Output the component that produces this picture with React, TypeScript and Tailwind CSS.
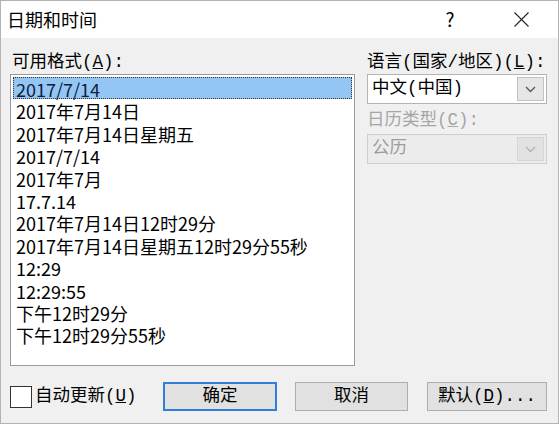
const formats = [
  "2017/7/14",
  "2017年7月14日",
  "2017年7月14日星期五",
  "2017/7/14",
  "2017年7月",
  "17.7.14",
  "2017年7月14日12时29分",
  "2017年7月14日星期五12时29分55秒",
  "12:29",
  "12:29:55",
  "下午12时29分",
  "下午12时29分55秒",
];

const uiFont = { fontFamily: '"Liberation Mono", "Noto Sans CJK SC", monospace' };
const cjkFont = { fontFamily: '"Noto Sans CJK SC", "Noto Sans", sans-serif' };

const Chevron = ({ color }: { color: string }) => (
  <svg width="11" height="7" viewBox="0 0 11 7">
    <path d="M1 1 L5.5 5.5 L10 1" fill="none" stroke={color} strokeWidth="1.3" />
  </svg>
);

const Combo = ({ text, disabled }: { text: string; disabled?: boolean }) => (
  <div
    className={
      "flex h-[30px] items-center border pl-[4px] pr-[2px] " +
      (disabled ? "border-[#cfcfcf] bg-[#ececec] text-[#9c9c9c]" : "border-[#b4b4b4] bg-white text-black")
    }
  >
    <span className="flex-1 text-[17.5px] leading-none">{text}</span>
    <div
      className={
        "flex h-[24px] w-[27px] items-center justify-center border " +
        (disabled ? "border-[#d6d6d6] bg-[#e2e2e2]" : "border-[#c2c2c2] bg-[#e6e6e6]")
      }
    >
      <Chevron color={disabled ? "#b0b0b0" : "#555555"} />
    </div>
  </div>
);

export default function App() {
  return (
    <div className="flex h-[424px] w-[559px] flex-col border border-[#b3b3b3] bg-[#f0f0f0] text-black" style={uiFont}>
      <div className="flex h-[37px] items-center bg-white pl-[6px]">
        <span className="text-[18px]" style={cjkFont}>日期和时间</span>
        <div className="ml-auto mr-[17px] flex items-center">
          <span className="w-[40px] text-center text-[19px]" style={cjkFont}>?</span>
          <div className="ml-[31px] flex w-[40px] justify-center">
            <svg width="15" height="15" viewBox="0 0 15 15">
              <path d="M0.5 0.5 L14.5 14.5 M14.5 0.5 L0.5 14.5" stroke="#222" strokeWidth="1.1" />
            </svg>
          </div>
        </div>
      </div>

      <div className="mt-[12px] flex pl-[9px]">
        <div className="w-[345px]">
          <div className="h-[24px] pl-[2px] text-[17.5px] leading-[24px]">
            可用格式(<span className="underline">A</span>):
          </div>
          <div className="h-[292px] border border-[#9a9a9a] bg-white p-[2px]" style={cjkFont}>
            {formats.map((f, i) => (
              <div
                key={i}
                className={
                  "h-[22.4px] pl-[2px] text-[18px] leading-[22px] " +
                  (i === 0 ? "border border-dotted border-[#333] bg-[#93c6f3] text-[#10203c]" : "border border-transparent")
                }
              >
                {f}
              </div>
            ))}
          </div>
        </div>

        <div className="ml-[12px] w-[180px]">
          <div className="h-[24px] text-[17.5px] leading-[24px]">
            语言(国家/地区)(<span className="underline">L</span>):
          </div>
          <Combo text="中文(中国)" />
          <div className="mt-[4px] h-[24px] text-[17.5px] leading-[24px] text-[#a6a6a6]">
            日历类型(<span className="underline">C</span>):
          </div>
          <div className="mt-[2px]">
            <Combo text="公历" disabled />
          </div>
        </div>
      </div>

      <div className="mt-[16px] flex h-[29px] items-center pl-[9px]">
        <div className="flex w-[153px] items-center">
          <div className="h-[22px] w-[22px] border-[1.5px] border-[#333] bg-white" />
          <span className="ml-[3px] text-[17.5px]">
            自动更新(<span className="underline">U</span>)
          </span>
        </div>
        <button className="flex h-[29px] w-[114px] items-center justify-center border-2 border-[#2f7ed8] bg-[#e1e1e1] text-[17.5px]">
          确定
        </button>
        <button className="ml-[18px] flex h-[29px] w-[113px] items-center justify-center border border-[#adadad] bg-[#e1e1e1] text-[17.5px]">
          取消
        </button>
        <button className="ml-[19px] flex h-[29px] w-[120px] items-center justify-center border border-[#adadad] bg-[#e1e1e1] text-[17.5px]">
          默认(<span className="underline">D</span>)...
        </button>
      </div>
    </div>
  );
}
